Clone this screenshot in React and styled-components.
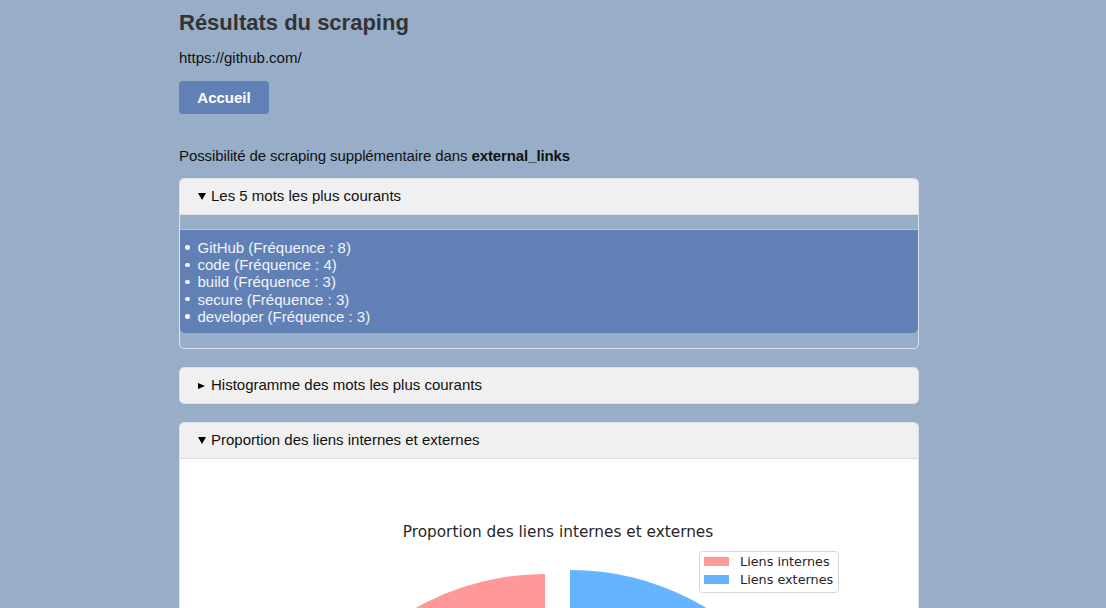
import React from 'react';
import styled, { createGlobalStyle } from 'styled-components';

const GlobalStyle = createGlobalStyle`
  body {
    margin: 0;
    background: #98aec8;
    font-family: "Liberation Sans", Arial, sans-serif;
    color: #111;
  }
`;

const Page = styled.div`
  width: 740px;
  margin: 0 auto;
  padding: 10px 8px 40px 0;
`;

const Title = styled.h1`
  margin: 0;
  font-size: 22px;
  line-height: 26px;
  font-weight: bold;
  color: #333;
`;

const Url = styled.p`
  margin: 13px 0 0;
  font-size: 15px;
  line-height: 18px;
`;

const HomeButton = styled.button`
  display: block;
  margin-top: 14px;
  width: 90px;
  height: 33px;
  border: none;
  border-radius: 4px;
  background: #6181b6;
  color: #fff;
  font-family: "Liberation Sans", Arial, sans-serif;
  font-size: 15px;
  font-weight: bold;
  cursor: pointer;
`;

const Note = styled.p`
  margin: 33px 0 13px;
  font-size: 15px;
  line-height: 18px;
  letter-spacing: -0.1px;
`;

const Panel = styled.details`
  border: 1px solid #dde2ea;
  border-radius: 5px;
  margin-bottom: 18px;
  overflow: hidden;
`;

const Summary = styled.summary`
  display: flex;
  align-items: center;
  gap: 6px;
  background: #f0f0f0;
  padding: 8px 18px 9px;
  font-size: 15px;
  line-height: 18px;
  cursor: pointer;
  list-style: none;
  border-bottom: 1px solid #dcdcdc;
  &::-webkit-details-marker {
    display: none;
  }
  &::before {
    content: '';
    width: 0;
    height: 0;
    border-left: 4px solid transparent;
    border-right: 4px solid transparent;
    border-top: 7px solid #000;
    margin-top: 1px;
    margin-right: -1px;
  }
  ${Panel}:not([open]) & {
    border-bottom: none;
  }
  ${Panel}:not([open]) &::before {
    border-top: 3.5px solid transparent;
    border-bottom: 3.5px solid transparent;
    border-left: 7px solid #000;
    border-right: 0;
    margin-right: 0;
  }
`;

const ListBody = styled.div`
  padding: 14px 0 15px;
`;

const WordList = styled.ul`
  margin: 0;
  padding: 9px 0 8px 5px;
  list-style: none;
  background: #6181b6;
  border-top: 1px solid #b4c3d6;
  border-radius: 0 0 5px 5px;
  color: #f2f4f8;
  font-size: 15px;
  line-height: 17.2px;
`;

const WordItem = styled.li`
  display: flex;
  align-items: center;
  gap: 8px;
  &::before {
    content: '';
    width: 4.5px;
    height: 4.5px;
    border-radius: 50%;
    background: #f2f4f8;
  }
`;

const ChartBody = styled.div`
  background: #fff;
`;

const words = [
  ['GitHub', 8],
  ['code', 4],
  ['build', 3],
  ['secure', 3],
  ['developer', 3],
];

function PieChart() {
  const R = 265;
  const bc = [390, 111 + R];
  const rc = [365, 115 + R];
  const pt = (c, deg) => {
    const a = (deg * Math.PI) / 180;
    return [c[0] + R * Math.sin(a), c[1] - R * Math.cos(a)];
  };
  const b1 = pt(bc, 216);
  const r1 = pt(rc, 216);
  const font = 'DejaVu Sans, sans-serif';
  return (
    <svg width="738" height="440" viewBox="0 0 738 440">
      <text x="378" y="78" textAnchor="middle" fontFamily={font} fontSize="15.3" fill="#262626">
        Proportion des liens internes et externes
      </text>
      <path d={`M${bc[0]} ${bc[1]} L${bc[0]} ${bc[1] - R} A${R} ${R} 0 1 1 ${b1[0]} ${b1[1]} Z`} fill="#66b3ff" />
      <path d={`M${rc[0]} ${rc[1]} L${r1[0]} ${r1[1]} A${R} ${R} 0 0 1 ${rc[0]} ${rc[1] - R} Z`} fill="#ff9999" />
      <rect x="519.5" y="92.5" width="139" height="41" rx="3" fill="#fff" fillOpacity="0.85" stroke="#d6d6d6" />
      <rect x="524" y="98" width="25" height="9" fill="#ff9999" />
      <rect x="524" y="116" width="25" height="9" fill="#66b3ff" />
      <text x="560" y="106.5" fontFamily={font} fontSize="12.8" fill="#262626">Liens internes</text>
      <text x="560" y="124.5" fontFamily={font} fontSize="12.8" fill="#262626">Liens externes</text>
    </svg>
  );
}

export default function App() {
  return (
    <>
      <GlobalStyle />
      <Page>
        <Title>Résultats du scraping</Title>
        <Url>https://github.com/</Url>
        <HomeButton>Accueil</HomeButton>
        <Note>
          Possibilité de scraping supplémentaire dans <b>external_links</b>
        </Note>

        <Panel open>
          <Summary>Les 5 mots les plus courants</Summary>
          <ListBody>
            <WordList>
              {words.map(([w, n]) => (
                <WordItem key={w}>
                  {w} (Fréquence : {n})
                </WordItem>
              ))}
            </WordList>
          </ListBody>
        </Panel>

        <Panel>
          <Summary>Histogramme des mots les plus courants</Summary>
        </Panel>

        <Panel open>
          <Summary>Proportion des liens internes et externes</Summary>
          <ChartBody>
            <PieChart />
          </ChartBody>
        </Panel>
      </Page>
    </>
  );
}
